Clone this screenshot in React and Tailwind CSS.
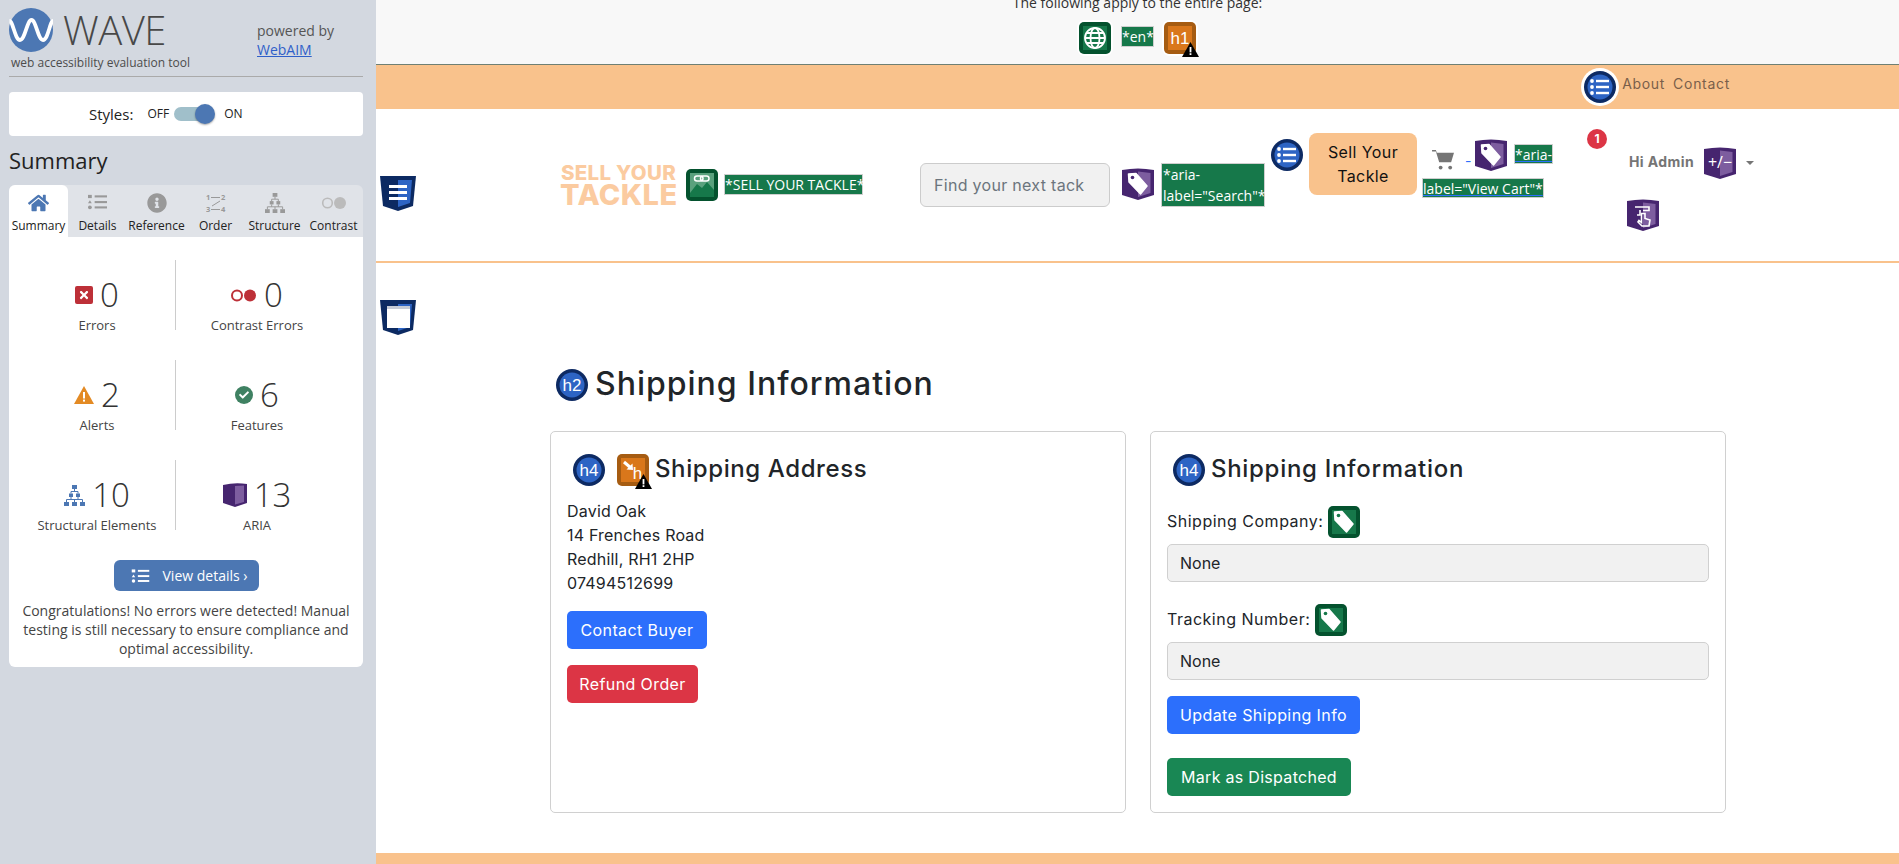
import { FaHome, FaInfoCircle, FaCheck, FaTimes } from 'react-icons/fa';

const stats = [
  { icon: 'error', value: 0, label: 'Errors' },
  { icon: 'contrast', value: 0, label: 'Contrast Errors' },
  { icon: 'alert', value: 2, label: 'Alerts' },
  { icon: 'feature', value: 6, label: 'Features' },
  { icon: 'structure', value: 10, label: 'Structural Elements' },
  { icon: 'aria', value: 13, label: 'ARIA' },
];

function ListGlyph({ color = '#fff' }) {
  return (
    <g fill={color}>
      <circle cx="8" cy="10" r="1.9" />
      <circle cx="8" cy="16" r="1.9" />
      <circle cx="8" cy="22" r="1.9" />
      <rect x="12" y="8.8" width="13" height="2.4" />
      <rect x="12" y="14.8" width="13" height="2.4" />
      <rect x="12" y="20.8" width="13" height="2.4" />
    </g>
  );
}

function DetailsIcon({ color, className }) {
  return (
    <svg viewBox="0 0 20 16" className={className} fill={color}>
      <rect x="0" y="0.5" width="4" height="3.4" />
      <path d="M2 6.2l2 3.2H0z" />
      <circle cx="2" cy="13.6" r="2" />
      <rect x="7" y="1" width="13" height="2.2" />
      <rect x="7" y="7" width="13" height="2.2" />
      <rect x="7" y="12.6" width="13" height="2.2" />
    </svg>
  );
}

// pyramid tree used by the Structure tab and the stat row
function TreeIcon({ color, className }) {
  return (
    <svg viewBox="0 0 21 21" className={className} fill={color} stroke={color}>
      <g strokeWidth="0">
        <rect x="8" y="0" width="5" height="4" />
        <rect x="5" y="8.5" width="4" height="3.5" />
        <rect x="12" y="8.5" width="4" height="3.5" />
        <rect x="0" y="17" width="5" height="4" />
        <rect x="8" y="17" width="5" height="4" />
        <rect x="16" y="17" width="5" height="4" />
      </g>
      <path d="M10.5 4v2.5M7 8.5v-2h7v2M7 12v2.5M14 12v2.5M2.5 17v-2.500h16V17M10.500 14.500V17" fill="none" strokeWidth="1" />
    </svg>
  );
}

function BlueCircle({ children, className = '' }) {
  return (
    <svg viewBox="0 0 32 32" className={`w-8 h-8 shrink-0 ${className}`}>
      <ellipse cx="16" cy="16" rx="16" ry="16" fill="#0d2a63" />
      <ellipse cx="16" cy="16" rx="12.5" ry="12.5" fill="#2d64c4" />
      {children}
    </svg>
  );
}

function HeadingCircle({ level }) {
  return (
    <BlueCircle>
      <text x="16" y="22" textAnchor="middle" fontSize="17" fill="#fff" fontFamily="Liberation Sans, sans-serif">{level}</text>
    </BlueCircle>
  );
}

function GreenBox({ children }) {
  return (
    <svg viewBox="0 0 32 32" className="w-8 h-8 shrink-0">
      <rect width="32" height="32" rx="5" fill="#04522e" />
      <rect x="4" y="4" width="24" height="24" fill="#16784a" />
      {children}
    </svg>
  );
}

function TagGlyph({ fill = '#fff', hole = '#16784a' }) {
  return (
    <g>
      <path d="M6.5 6 L14 5.5 L25 18 L18.5 26 L7 14 Z" fill={fill} strokeLinejoin="round" stroke={fill} strokeWidth="1.5" />
      <circle cx="10.5" cy="9.5" r="1.8" fill={hole} />
    </g>
  );
}

function PurpleShield({ children }) {
  return (
    <svg viewBox="0 0 32 32" className="w-8 h-8 shrink-0">
      <path d="M0 2 Q16 -1 32 2 V27 L16 32 L0 27 Z" fill="#46256f" />
      <path d="M16 3.5 L28.5 5 V25 L16 29 Z" fill="#7d5d9f" />
      {children}
    </svg>
  );
}

function BlueShield({ children }) {
  return (
    <svg viewBox="0 0 36 36" className="w-9 h-9 shrink-0">
      <path d="M0 1 H36 L33 31 L18 36 L3 31 Z" fill="#0c2a62" />
      <path d="M18 5 H32 L30 28 L18 32 Z" fill="#2d64c4" />
      {children}
    </svg>
  );
}

function WarnTriangle({ className }) {
  return (
    <svg viewBox="0 0 17 15" className={className}>
      <path d="M8.5 0 L17 15 H0 Z" fill="#000" />
      <rect x="7.6" y="5" width="1.8" height="5.4" fill="#fff" />
      <rect x="7.6" y="11.2" width="1.8" height="1.8" fill="#fff" />
    </svg>
  );
}

function OrangeBox({ children }) {
  return (
    <div className="relative w-8 h-8 shrink-0">
      <svg viewBox="0 0 32 32" className="w-8 h-8">
        <rect width="32" height="32" rx="5" fill="#a65c12" />
        <rect x="4" y="4" width="24" height="24" fill="#d9771b" />
        {children}
      </svg>
      <WarnTriangle className="absolute right-[-3px] bottom-[-3px] w-[17px] h-[15px]" />
    </div>
  );
}

function GreenLabel({ children, className = '' }) {
  return (
    <span className={`bg-[#16784a] border border-[#cfcfcf] text-white font-['Open_Sans',sans-serif] text-[14px] leading-[19px] ${className}`}>
      {children}
    </span>
  );
}

function StatIcon({ type }) {
  if (type === 'error') {
    return (
      <span className="w-[18px] h-[18px] rounded-[2px] bg-[#bd3038] flex items-center justify-center">
        <FaTimes className="text-white w-[12px] h-[12px]" />
      </span>
    );
  }
  if (type === 'contrast') {
    return (
      <svg viewBox="0 0 26 13" className="w-[26px] h-[13px]">
        <circle cx="6" cy="6.5" r="5" fill="none" stroke="#bd3038" strokeWidth="2" />
        <circle cx="19" cy="6.5" r="6" fill="#bd3038" />
      </svg>
    );
  }
  if (type === 'alert') {
    return (
      <svg viewBox="0 0 20 18" className="w-5 h-[18px]">
        <path d="M10 0 L20 18 H0 Z" fill="#e38a24" />
        <rect x="9" y="6" width="2" height="6.5" fill="#fff" />
        <rect x="9" y="13.6" width="2" height="2" fill="#fff" />
      </svg>
    );
  }
  if (type === 'feature') {
    return (
      <span className="w-[18px] h-[18px] rounded-full bg-[#3f8162] flex items-center justify-center">
        <FaCheck className="text-white w-[10px] h-[10px]" />
      </span>
    );
  }
  if (type === 'structure') {
    return <TreeIcon color="#4c77b3" className="w-[21px] h-[21px]" />;
  }
  return (
    <svg viewBox="0 0 24 24" className="w-6 h-6">
      <path d="M0 2 Q12 -1 24 1 V20 L12 24 L0 20 Z" fill="#46256f" />
      <path d="M12 3 L21 2.5 V19 L12 21.5 Z" fill="#7d5d9f" />
    </svg>
  );
}

function Sidebar() {
  return (
    <aside className="w-[376px] shrink-0 h-full bg-[#d3d8e0] pl-[9px] pr-[13px] font-['Open_Sans',sans-serif] text-[#333]">
      <div className="h-[77px] border-b border-[#aaaaaa] flex">
        <div className="w-[248px] pt-2">
          <div className="flex items-start">
            <svg viewBox="0 0 44 44" className="w-11 h-11 shrink-0">
              <circle cx="22" cy="22" r="22" fill="#4c77b3" />
              <path d="M0.5 13 C4 13 6 32 11 32 C16 32 18 12 22.5 12 C27 12 29 32 34 32 C39 32 41 13 44 13" fill="none" stroke="#fff" strokeWidth="3.8" />
            </svg>
            <span className="ml-[10px] text-[40px] leading-[44px] font-light text-[#484848] tracking-[-0.5px]">WAVE</span>
          </div>
          <p className="ml-[2px] mt-[3px] text-[12px] leading-[16px] text-[#4c4c4c]">web accessibility evaluation tool</p>
        </div>
        <div className="pt-[21px] text-[14px] leading-[19px] text-[#555]">
          <p>powered by</p>
          <a href="#" className="text-[#2f5fc9] underline">WebAIM</a>
        </div>
      </div>

      <div className="mt-[15px] h-[44px] bg-white rounded-[4px] flex items-center pl-[80px]">
        <span className="text-[15px] text-[#222]">Styles:</span>
        <span className="ml-[14px] text-[12px] text-[#222]">OFF</span>
        <span className="relative ml-[5px] w-[30px] h-[14px] rounded-full bg-[#a0bfca]">
          <span className="absolute right-[-11px] top-[-3px] w-5 h-5 rounded-full bg-[#4c77b3] shadow-[0_1px_2px_rgba(0,0,0,0.35)]" />
        </span>
        <span className="ml-[20px] text-[12px] text-[#222]">ON</span>
      </div>

      <h2 className="mt-[9px] text-[22px] leading-[30px] text-[#222]">Summary</h2>

      <div className="mt-[10px] grid grid-cols-6 h-[52px] bg-[#e0e3e8] rounded-t-[6px] text-[12px] text-[#222] text-center">
        <div className="bg-white rounded-t-[6px] flex flex-col items-center pt-2">
          <FaHome className="text-[#4c77b3] w-[21px] h-[20px]" />
          <span className="mt-[5px] leading-[16px] whitespace-nowrap">Summary</span>
        </div>
        <div className="flex flex-col items-center pt-2">
          <DetailsIcon color="#999" className="w-[19px] h-[16px] mt-[1px] mb-[3px]" />
          <span className="mt-[5px] leading-[16px]">Details</span>
        </div>
        <div className="flex flex-col items-center pt-2">
          <FaInfoCircle className="text-[#999] w-5 h-5" />
          <span className="mt-[5px] leading-[16px]">Reference</span>
        </div>
        <div className="flex flex-col items-center pt-2">
          <svg viewBox="0 0 20 20" className="w-5 h-5" fill="#999" stroke="#999">
            <text x="0" y="7" fontSize="7.5" strokeWidth="0" fontFamily="Open Sans, sans-serif" fontWeight="700">1</text>
            <text x="15" y="7" fontSize="7.5" strokeWidth="0" fontFamily="Open Sans, sans-serif" fontWeight="700">2</text>
            <text x="0" y="19" fontSize="7.5" strokeWidth="0" fontFamily="Open Sans, sans-serif" fontWeight="700">3</text>
            <text x="15" y="19" fontSize="7.5" strokeWidth="0" fontFamily="Open Sans, sans-serif" fontWeight="700">4</text>
            <path d="M5 4.5h9M5 16.5h9M14 8l-8 5" fill="none" strokeWidth="1" />
          </svg>
          <span className="mt-[5px] leading-[16px]">Order</span>
        </div>
        <div className="flex flex-col items-center pt-2">
          <TreeIcon color="#999" className="w-5 h-5" />
          <span className="mt-[5px] leading-[16px]">Structure</span>
        </div>
        <div className="flex flex-col items-center pt-2">
          <svg viewBox="0 0 26 20" className="w-[26px] h-5">
            <circle cx="6.5" cy="10" r="4.8" fill="none" stroke="#bbb" strokeWidth="1.6" />
            <circle cx="19" cy="10" r="6" fill="#bbb" />
          </svg>
          <span className="mt-[5px] leading-[16px]">Contrast</span>
        </div>
      </div>

      <div className="h-[430px] bg-white rounded-b-[6px] pt-[23px]">
        <div className="grid grid-cols-[167px_162px] gap-y-[30px]">
          {stats.map((s, i) => (
            <div key={s.label} className={`h-[70px] flex flex-col items-center pt-[15px] ${i % 2 === 0 ? 'border-r border-[#cccccc] pl-[10px]' : ''}`}>
              <div className="h-[40px] shrink-0 flex items-center justify-center gap-[7px]">
                <StatIcon type={s.icon} />
                <span className="text-[33px] leading-[40px] font-light text-[#333]">{s.value}</span>
              </div>
              <span className="mt-[1px] text-[13px] leading-[18px] text-[#444] whitespace-nowrap">{s.label}</span>
            </div>
          ))}
        </div>
        <a className="mx-auto mt-[30px] w-[145px] h-[31px] rounded-[6px] bg-[#4c77b3] flex items-center text-white text-[14px] pl-[17px]">
          <DetailsIcon color="#fff" className="w-[19px] h-[14px]" />
          <span className="ml-[13px] whitespace-nowrap">View details ›</span>
        </a>
        <p className="mt-[10px] px-[8px] text-center text-[14px] leading-[19px] text-[#444]">
          Congratulations! No errors were detected! Manual testing is still necessary to ensure compliance and optimal accessibility.
        </p>
      </div>
    </aside>
  );
}

function Header() {
  return (
    <header className="h-[154px] shrink-0 bg-white border-b-2 border-[#f9c28c] flex items-start font-['Inter',sans-serif]">
      <div className="ml-1 mt-[66px]">
        <BlueShield>
          <g fill="#fff">
            <rect x="9" y="10" width="18" height="3" />
            <rect x="9" y="16" width="18" height="3" />
            <rect x="9" y="22" width="18" height="3" />
          </g>
        </BlueShield>
      </div>

      <div className="ml-[144px] mt-[54px] w-[117px] shrink-0 text-[#fbcba0] font-extrabold text-center">
        <p className="text-[20.5px] leading-[19px] tracking-[0.3px] whitespace-nowrap">SELL YOUR</p>
        <p className="text-[29px] leading-[26px] tracking-[0.4px]">TACKLE</p>
      </div>

      <div className="ml-[9px] mt-[60px]">
        <GreenBox>
          <rect x="4" y="4" width="24" height="20" fill="#5aa17d" />
          <path d="M4 24 L11 15 L16 19 L21 13 L28 21 V24 Z" fill="#16784a" />
          <g fill="none" stroke="#fff" strokeWidth="1.5">
            <rect x="8.5" y="7" width="8.5" height="5" rx="2.5" />
            <rect x="14.5" y="7" width="8.5" height="5" rx="2.5" />
          </g>
        </GreenBox>
      </div>

      <GreenLabel className="ml-[6px] mt-[65px] w-[139px] h-[21px] shrink-0 text-center whitespace-nowrap">*SELL YOUR TACKLE*</GreenLabel>

      <div className="ml-[57px] mt-[54px] w-[190px] h-[44px] shrink-0 bg-[#f1f1f1] border border-[#cccccc] rounded-[6px] flex items-center pl-[13px] text-[16px] text-[#6c757d]">
        <span className="w-[150px] overflow-hidden whitespace-nowrap tracking-[0.3px]">Find your next tackle</span>
      </div>

      <div className="ml-3 mt-[59px]">
        <PurpleShield>
          <TagGlyph hole="#46256f" />
        </PurpleShield>
      </div>

      <GreenLabel className="ml-[7px] mt-[54px] w-[104px] h-[44px] shrink-0 px-[1px] leading-[21px]">*aria-label="Search"*</GreenLabel>

      <div className="ml-[6px] mt-[30px]">
        <BlueCircle><ListGlyph /></BlueCircle>
      </div>

      <button className="ml-[6px] mt-[24px] w-[108px] h-[62px] shrink-0 bg-[#f9c28c] rounded-[8px] text-[16px] leading-[24px] text-[#111] tracking-[0.4px]">
        Sell Your<br />Tackle
      </button>

      <div className="ml-[5px] mt-[30px] w-[129px] shrink-0">
        <div className="flex items-start pl-[10px] h-8">
          <svg viewBox="0 0 24 22" className="w-[23px] h-[21px] mt-[10px] shrink-0" fill="#757575">
            <path d="M0 1h4l1 3h18l-3 10H7.5L4 2.5H0z" />
            <circle cx="9" cy="19.5" r="2" />
            <circle cx="19" cy="19.5" r="2" />
          </svg>
          <span className="ml-[10px] mt-[12px] w-[4px] text-[14px] leading-[20px] text-[#2c6ffc]">-</span>
          <div className="ml-[6px]">
            <PurpleShield>
              <TagGlyph hole="#46256f" />
            </PurpleShield>
          </div>
          <GreenLabel className="ml-[7px] mt-[5px] h-5 shrink-0 underline decoration-[#2c6ffc] whitespace-nowrap">*aria-</GreenLabel>
        </div>
        <div className="mt-[7px] flex">
          <GreenLabel className="h-5 underline decoration-[#2c6ffc] whitespace-nowrap">label="View Cart"*</GreenLabel>
        </div>
      </div>

      <div className="relative ml-[76px] mt-[38px]">
        <span className="absolute left-[-40px] top-[-18px] w-5 h-5 rounded-full bg-[#dc3545] text-white text-[12px] leading-5 font-bold text-center">1</span>
        <div className="flex items-center">
          <span className="ml-[2px] pb-[3px] w-[75px] text-[14px] font-bold text-[#757575] tracking-[0.4px] whitespace-nowrap">Hi Admin</span>
          <PurpleShield>
            <text x="16" y="21" textAnchor="middle" fontSize="16" fill="#fff" fontFamily="Open Sans, sans-serif">+/−</text>
          </PurpleShield>
          <span className="ml-[10px] border-x-[4px] border-x-transparent border-t-[4px] border-t-[#757575]" />
        </div>
        <div className="mt-5">
          <PurpleShield>
            <g fill="none" stroke="#fff" strokeWidth="1.6">
              <path d="M8 8h14v3.5H16" />
              <path d="M13 11v5h-3" />
              <path d="M14.5 14.5v9l-2.5-2-1 1.5 4 4h7l1-6-5-1.5v-5z" />
            </g>
          </PurpleShield>
        </div>
      </div>
    </header>
  );
}

function AddressCard() {
  return (
    <section className="w-[576px] h-[382px] border border-[#d0d0d0] rounded-[5px] px-4 pt-[22px]">
      <div className="flex items-center h-8 pl-[6px]">
        <HeadingCircle level="h4" />
        <div className="ml-3">
          <OrangeBox>
            <path d="M7 8 L14 14" stroke="#fff" strokeWidth="3" />
            <path d="M16 16 L15.5 9.5 L9.5 15.5 Z" fill="#fff" />
            <text x="20.5" y="25" textAnchor="middle" fontSize="17" fill="#fff" fontFamily="Liberation Sans, sans-serif">h</text>
          </OrangeBox>
        </div>
        <h4 className="ml-[6px] pb-[2px] text-[24px] leading-8 font-medium text-[#212529] tracking-[0.6px] whitespace-nowrap">Shipping Address</h4>
      </div>
      <div className="mt-[13px] text-[16px] leading-6 text-[#212529] tracking-[0.2px]">
        <p>David Oak</p>
        <p>14 Frenches Road</p>
        <p>Redhill, RH1 2HP</p>
        <p>07494512699</p>
      </div>
      <button className="block mt-[16px] w-[140px] h-[38px] rounded-[5px] bg-[#2c6ffc] text-white text-[16px] tracking-[0.4px]">Contact Buyer</button>
      <button className="block mt-4 w-[131px] h-[38px] rounded-[5px] bg-[#dc3545] text-white text-[16px] tracking-[0.4px]">Refund Order</button>
    </section>
  );
}

function ShippingField({ label, className = '' }) {
  return (
    <div className={className}>
      <div className="flex items-center h-8 text-[16px] text-[#212529]">
        <label className="whitespace-nowrap tracking-[0.5px] pb-[2px]">{label}</label>
        <span className="ml-[5px]">
          <GreenBox>
            <TagGlyph />
          </GreenBox>
        </span>
      </div>
      <div className="mt-[6px] h-[38px] bg-[#f1f1f1] border border-[#d0d0d0] rounded-[5px] flex items-center pl-3 text-[16px] text-[#212529]">
        None
      </div>
    </div>
  );
}

function ShippingCard() {
  return (
    <section className="w-[576px] h-[382px] border border-[#d0d0d0] rounded-[5px] px-4 pt-[22px]">
      <div className="flex items-center h-8 pl-[6px]">
        <HeadingCircle level="h4" />
        <h4 className="ml-[6px] pb-[2px] text-[24px] leading-8 font-medium text-[#212529] tracking-[0.7px] whitespace-nowrap">Shipping Information</h4>
      </div>
      <ShippingField label="Shipping Company:" className="mt-5" />
      <ShippingField label="Tracking Number:" className="mt-[22px]" />
      <button className="block mt-4 w-[193px] h-[38px] rounded-[5px] bg-[#2c6ffc] text-white text-[16px] tracking-[0.4px]">Update Shipping Info</button>
      <button className="block mt-6 w-[184px] h-[38px] rounded-[5px] bg-[#198754] text-white text-[16px] tracking-[0.3px]">Mark as Dispatched</button>
    </section>
  );
}

export default function App() {
  return (
    <div className="flex h-[864px] w-full overflow-hidden bg-white">
      <Sidebar />
      <main className="flex-1 min-w-0 flex flex-col font-['Inter',sans-serif]">
        <div className="h-[65px] shrink-0 overflow-hidden bg-[#f8f8f8] border-b border-[#6f8074] text-center">
          <p className="-mt-[7px] text-[14px] leading-5 text-[#333] font-['Open_Sans',sans-serif]">The following apply to the entire page:</p>
          <div className="mt-[9px] flex justify-center items-start gap-[10px]">
            <span className="rounded-[6px] ring-2 ring-white">
              <GreenBox>
                <g fill="none" stroke="#fff" strokeWidth="1.8">
                  <circle cx="16" cy="16" r="10" />
                  <ellipse cx="16" cy="16" rx="4.5" ry="10" />
                  <path d="M6 16h20M7.5 11h17M7.5 21h17" />
                </g>
              </GreenBox>
            </span>
            <GreenLabel className="mt-1 h-[21px] w-[33px] text-center">*en*</GreenLabel>
            <span className="rounded-[6px] ring-2 ring-white">
              <OrangeBox>
                <text x="16" y="22" textAnchor="middle" fontSize="17" fill="#fff" fontFamily="Liberation Sans, sans-serif">h1</text>
              </OrangeBox>
            </span>
          </div>
        </div>

        <div className="h-[44px] shrink-0 bg-[#f9c28c] flex justify-end items-center pr-[169px] text-[14px] text-[#7a5f4a] tracking-[0.7px]">
          <div className="rounded-full bg-white w-[38px] h-[38px] flex items-center justify-center">
            <BlueCircle><ListGlyph /></BlueCircle>
          </div>
          <span className="ml-[3px] pb-2">About</span>
          <span className="ml-2 pb-2">Contact</span>
        </div>

        <Header />

        <div className="ml-1 mt-[36px] w-9">
          <BlueShield>
            <rect x="7" y="7" width="23" height="22" fill="#fff" />
            <rect x="7" y="7" width="23" height="3" fill="#c5cbd6" />
          </BlueShield>
        </div>

        <div className="ml-[174px] mt-[34px]">
          <div className="flex items-center h-8 pl-[6px]">
            <HeadingCircle level="h2" />
            <h2 className="ml-[7px] pb-[3px] text-[32px] leading-8 font-medium text-[#212529] tracking-[1px] whitespace-nowrap">Shipping Information</h2>
          </div>
          <div className="mt-[30px] flex gap-6">
            <AddressCard />
            <ShippingCard />
          </div>
        </div>

        <div className="mt-auto h-[11px] shrink-0 bg-[#f9c28c]" />
      </main>
    </div>
  );
}
